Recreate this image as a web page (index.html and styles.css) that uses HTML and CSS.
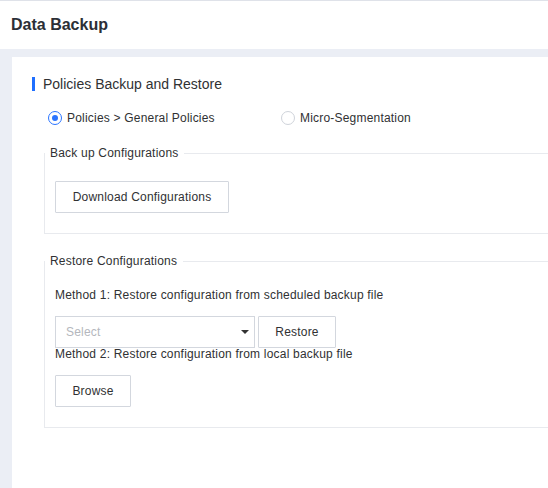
FILE: index.html
```html
<!DOCTYPE html>
<html lang="en">

<head>
  <meta charset="UTF-8">
  <meta name="viewport" content="width=device-width, initial-scale=1.0">
  <title>Data Backup</title>
  <link rel="stylesheet" href="styles.css">
</head>

<body>
  <div class="header">Data Backup</div>

  <div class="main">
    <div class="card">
      <div class="section-title"><span class="bar"></span>Policies Backup and Restore</div>

      <div class="radio-row">
        <label class="radio-item">
          <span class="radio checked"></span>
          <span>Policies &gt; General Policies</span>
        </label>
        <label class="radio-item">
          <span class="radio"></span>
          <span>Micro-Segmentation</span>
        </label>
      </div>

      <fieldset class="group first">
        <legend>Back up Configurations</legend>
        <div class="group-body">
          <button class="btn btn-download">Download Configurations</button>
        </div>
      </fieldset>

      <fieldset class="group second">
        <legend>Restore Configurations</legend>
        <div class="group-body">
          <div class="method-one">Method 1: Restore configuration from scheduled backup file</div>
          <div class="select-row">
            <div class="select">
              <span class="placeholder">Select</span>
              <span class="caret"></span>
            </div>
            <button class="btn btn-restore">Restore</button>
          </div>
          <div class="method-two">Method 2: Restore configuration from local backup file</div>
          <button class="btn btn-browse">Browse</button>
        </div>
      </fieldset>
    </div>
  </div>
</body>

</html>
```

FILE: styles.css
```css
body {
  margin: 0;
  font-family: 'Liberation Sans', Arial, sans-serif;
  color: #303133;
  background: #ebeef5;
  overflow: hidden;
}

.header {
  height: 48px;
  line-height: 48px;
  border-top: 1px solid #dfe2e9;
  background: #fff;
  padding-left: 11px;
  font-size: 16px;
  font-weight: bold;
  color: #2c2f36;
}

.main {
  padding: 8px 0 0 12px;
  min-width: 800px;
}

.card {
  background: #fff;
  min-height: 460px;
  padding: 20px 0 0 20px;
}

.section-title {
  display: flex;
  align-items: center;
  height: 14px;
  line-height: 14px;
  font-size: 14px;
  color: #303133;
}

.bar {
  width: 3px;
  height: 14px;
  background: #1f6fff;
  margin-right: 8px;
}

.radio-row {
  display: flex;
  margin: 20px 0 0 16px;
  font-size: 12px;
  letter-spacing: 0.2px;
}

.radio-item {
  display: flex;
  align-items: center;
  width: 233px;
  height: 14px;
  line-height: 14px;
}

.radio {
  box-sizing: border-box;
  width: 14px;
  height: 14px;
  border: 1px solid #cfd3da;
  border-radius: 50%;
  margin-right: 5px;
  position: relative;
  background: #fff;
}

.radio.checked {
  border-color: #2a74ff;
}

.radio.checked::after {
  content: '';
  position: absolute;
  left: 3px;
  top: 3px;
  width: 6px;
  height: 6px;
  border-radius: 50%;
  background: #2a74ff;
}

.group {
  margin: 20px 0 0 12px;
  padding: 0;
  border: 1px solid #e8eaee;
  font-size: 12px;
  letter-spacing: 0.2px;
}

.group.second {
  margin-top: 19px;
}

.group legend {
  padding: 0 6px 0 5px;
  line-height: 16px;
  color: #303133;
}

.group-body {
  padding: 20px 10px 20px;
}

.btn {
  box-sizing: border-box;
  height: 32px;
  border: 1px solid #d3d7de;
  border-radius: 1px;
  background: #fff;
  font-family: inherit;
  font-size: 12px;
  letter-spacing: 0.2px;
  color: #303133;
  padding: 0;
  display: block;
}

.btn-download {
  width: 174px;
}

.method-one {
  margin-top: -3px;
  line-height: 18px;
}

.select-row {
  display: flex;
  gap: 3px;
  margin-top: 12px;
}

.select {
  box-sizing: border-box;
  width: 200px;
  height: 32px;
  border: 1px solid #d3d7de;
  display: flex;
  align-items: center;
  justify-content: space-between;
  padding: 0 5px 0 10px;
}

.placeholder {
  color: #b4b7bd;
}

.caret {
  width: 0;
  height: 0;
  border-left: 4px solid transparent;
  border-right: 4px solid transparent;
  border-top: 4px solid #333;
}

.btn-restore {
  width: 78px;
}

.method-two {
  line-height: 13px;
}

.btn-browse {
  width: 76px;
  margin-top: 14px;
}
```
